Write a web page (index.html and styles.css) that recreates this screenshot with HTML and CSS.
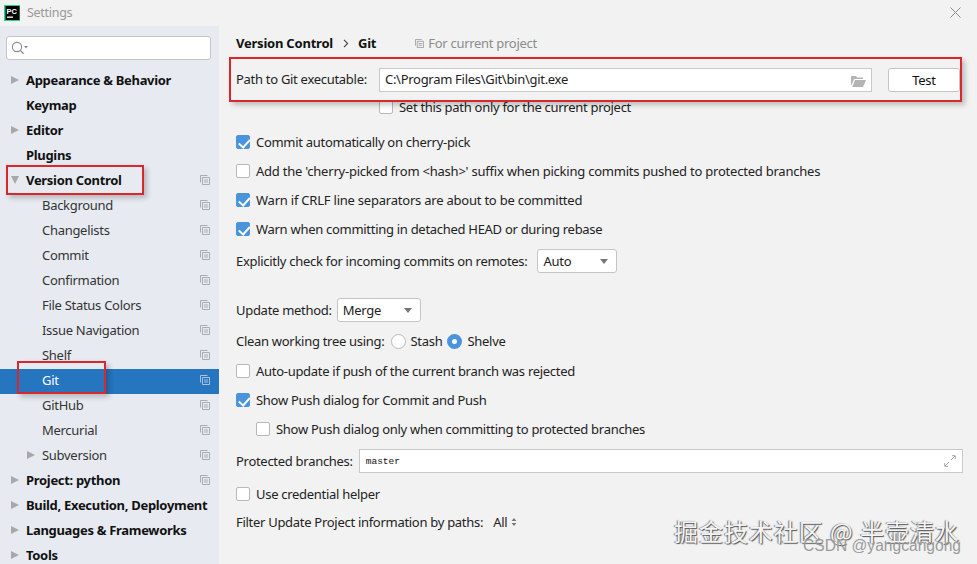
FILE: index.html
```html
<!DOCTYPE html>
<html lang="en">
<head>
<meta charset="utf-8">
<title>Settings</title>
<link rel="stylesheet" href="styles.css">
</head>
<body>
<svg class="defs" width="0" height="0" aria-hidden="true">
  <defs>
    <symbol id="copy" viewBox="0 0 10 10">
      <path d="M0.5 7.5V0.5H7.5M2.5 2.5H9.5V9.5H2.5ZM4 5H8M4 7H8" fill="none" stroke="currentColor" stroke-width="1"/>
    </symbol>
  </defs>
</svg>
<div class="window">
  <header class="titlebar">
    <svg class="logo" width="16" height="16" viewBox="0 0 16 16">
      <rect width="16" height="16" fill="#21d789"/>
      <rect x="1.5" y="1" width="14" height="14" fill="#000"/>
      <rect x="3" y="11.5" width="6" height="1.3" fill="#fff"/>
      <text x="2.6" y="8.6" class="logo-text">PC</text>
    </svg>
    <span class="title">Settings</span>
    <svg class="close" width="11" height="11" viewBox="0 0 11 11"><path d="M0.5 0.5L10.5 10.5M10.5 0.5L0.5 10.5" stroke="#8c8c8c" fill="none"/></svg>
  </header>
  <div class="body">
    <aside class="sidebar">
      <div class="search">
        <svg width="17" height="14" viewBox="0 0 17 14"><circle cx="6" cy="6" r="4.6" fill="none" stroke="#8a8a8a" stroke-width="1.1"/><path d="M9.4 9.4L12.5 12.7" stroke="#8a8a8a" stroke-width="1.3"/><path d="M13 5h4l-2 2.4z" fill="#8a8a8a"/></svg>
      </div>
      <nav class="tree">
        <div class="node top"><i class="tri"></i>Appearance &amp; Behavior</div>
        <div class="node top">Keymap</div>
        <div class="node top"><i class="tri"></i>Editor</div>
        <div class="node top">Plugins</div>
        <div class="node top"><i class="tri open"></i>Version Control<svg class="cp"><use href="#copy"/></svg></div>
        <div class="node sub">Background<svg class="cp"><use href="#copy"/></svg></div>
        <div class="node sub">Changelists<svg class="cp"><use href="#copy"/></svg></div>
        <div class="node sub">Commit<svg class="cp"><use href="#copy"/></svg></div>
        <div class="node sub">Confirmation<svg class="cp"><use href="#copy"/></svg></div>
        <div class="node sub">File Status Colors<svg class="cp"><use href="#copy"/></svg></div>
        <div class="node sub">Issue Navigation<svg class="cp"><use href="#copy"/></svg></div>
        <div class="node sub">Shelf<svg class="cp"><use href="#copy"/></svg></div>
        <div class="node sub selected">Git<svg class="cp"><use href="#copy"/></svg></div>
        <div class="node sub">GitHub<svg class="cp"><use href="#copy"/></svg></div>
        <div class="node sub">Mercurial<svg class="cp"><use href="#copy"/></svg></div>
        <div class="node sub"><i class="tri"></i>Subversion<svg class="cp"><use href="#copy"/></svg></div>
        <div class="node top"><i class="tri"></i>Project: python<svg class="cp"><use href="#copy"/></svg></div>
        <div class="node top"><i class="tri"></i>Build, Execution, Deployment</div>
        <div class="node top"><i class="tri"></i>Languages &amp; Frameworks</div>
        <div class="node top"><i class="tri"></i>Tools</div>
      </nav>
    </aside>
    <main class="panel">
      <div class="crumbs">
        <b>Version Control</b>
        <svg class="chev" width="6" height="9" viewBox="0 0 6 9"><path d="M1 .8L4.6 4.5 1 8.2" fill="none" stroke="#444" stroke-width="1.1"/></svg>
        <b>Git</b>
        <span class="scope"><svg class="cp-small"><use href="#copy"/></svg>For current project</span>
      </div>
      <div class="row path-row">
        <span class="path-label">Path to Git executable:</span>
        <div class="field path-field">C:\Program Files\Git\bin\git.exe
          <svg class="folder" width="15" height="12" viewBox="0 0 15 12"><path d="M0 11V1h5l1 1.5h6V4H3.2L0 11zM1.2 12L4 5h11l-3 7z" fill="#b4b4b4"/></svg>
        </div>
        <button class="btn">Test</button>
      </div>
      <label class="row set-row"><i class="box"></i>Set this path only for the current project</label>
      <div class="checks first">
        <label class="row chk"><i class="box on"></i>Commit automatically on cherry-pick</label>
        <label class="row chk wide"><i class="box"></i>Add the 'cherry-picked from &lt;hash&gt;' suffix when picking commits pushed to protected branches</label>
        <label class="row chk wide"><i class="box on"></i>Warn if CRLF line separators are about to be committed</label>
        <label class="row chk"><i class="box on"></i>Warn when committing in detached HEAD or during rebase</label>
      </div>
      <div class="row ctl auto-row">Explicitly check for incoming commits on remotes:<span class="combo auto">Auto<i class="caret"></i></span></div>
      <div class="row ctl merge-row">Update method:<span class="combo merge">Merge<i class="caret"></i></span></div>
      <div class="row ctl clean-row">Clean working tree using:<i class="radio"></i><span class="r-label">Stash</span><i class="radio on"></i><span>Shelve</span></div>
      <div class="checks second">
        <label class="row chk"><i class="box"></i>Auto-update if push of the current branch was rejected</label>
        <label class="row chk"><i class="box on"></i>Show Push dialog for Commit and Push</label>
        <label class="row chk nested"><i class="box"></i>Show Push dialog only when committing to protected branches</label>
      </div>
      <div class="row ctl prot-row">Protected branches:
        <div class="field prot-field"><span class="mono">master</span>
          <svg class="expand" width="12" height="12" viewBox="0 0 12 12"><path d="M7 5l4-4M8 .7h3.3V4M5 7l-4 4M.7 8v3.3H4" fill="none" stroke="#a8a8a8"/></svg>
        </div>
      </div>
      <label class="row chk cred"><i class="box"></i>Use credential helper</label>
      <div class="row ctl filter-row">Filter Update Project information by paths:<span class="all">All</span><svg width="6" height="10" viewBox="0 0 6 10"><path d="M3 1l2.4 3H.6zM3 9L.6 6h4.8z" fill="#777"/></svg></div>
    </main>
  </div>
  <div class="mark mark-path"></div>
  <div class="mark mark-vc"></div>
  <div class="mark mark-git"></div>
  <div class="wm-juejin">掘金技术社区 @ 半壶清水</div>
  <div class="wm-csdn">CSDN @yangcangong</div>
</div>
</body>
</html>
```
FILE: styles.css
```css
* { box-sizing: border-box; }
html, body { margin: 0; padding: 0; }
body { font-family: "Noto Sans", "Noto Sans CJK SC", sans-serif; font-size: 13px; letter-spacing: -.29px; color: #222; background: #f2f2f2; }
.defs { position: absolute; }
.window { position: relative; width: 977px; height: 564px; overflow: hidden; background: #f2f2f2; display: flex; flex-direction: column; }
.titlebar { height: 26px; flex: none; display: flex; align-items: center; padding: 0 16px 1px 4px; }
.logo { flex: none; }
.logo-text { font: 700 7.5px "Liberation Sans", sans-serif; fill: #fff; letter-spacing: 0; }
.title { margin-left: 7px; color: #999; font-size: 12.5px; }
.close { margin-left: auto; margin-top: 0; }
.body { flex: 1; display: flex; min-height: 0; }
.sidebar { width: 219px; flex: none; background: #e7ebf1; padding: 10px 0 0; display: flex; flex-direction: column; }
.search { flex: none; margin: 0 8px 0 6px; height: 24px; background: #fff; border: 1px solid #c4c4c4; border-radius: 3px; display: flex; align-items: center; padding-left: 4px; }
.tree { flex: none; margin-top: 9px; }
.node { height: 25px; padding-bottom: 4px; display: flex; align-items: center; position: relative; white-space: nowrap; color: #222; }
.top { padding-left: 26px; font-weight: 700; color: #111; letter-spacing: -.31px; }
.sub { padding-left: 42px; color: #333; }
.selected { background: #2675bf; color: #fff; }
.tri { position: absolute; left: 11px; top: 7px; width: 0; height: 0; border-left: 8px solid #a8a8a8; border-top: 4.5px solid transparent; border-bottom: 4.5px solid transparent; }
.sub .tri { left: 27px; }
.tri.open { left: 11px; top: 7px; border-top: 8px solid #a8a8a8; border-left: 4.5px solid transparent; border-right: 4.5px solid transparent; border-bottom: 0; }
.cp { position: absolute; left: 200px; top: 6px; width: 10px; height: 10px; color: #a9adb3; }
.selected .cp { color: #a6c4e2; }
.panel { flex: 1; padding: 5px 16px 0 17px; min-width: 0; }
.row { display: flex; align-items: center; white-space: nowrap; }
.wide { letter-spacing: -.22px; }
.crumbs { height: 24px; display: flex; align-items: center; color: #111; }
.crumbs b { letter-spacing: -.22px; }
.chev { margin: 0 9px 0 10px; }
.scope { margin-left: 39px; color: #8c8c8c; display: flex; align-items: center; }
.cp-small { width: 9px; height: 9px; margin-right: 4px; color: #a0a0a0; }
.path-row { margin-top: 13px; height: 24px; }
.path-label { width: 143px; flex: none; padding-bottom: 2px; }
.field { position: relative; background: #fff; border: 1px solid #c9c9c9; height: 24px; display: flex; align-items: center; padding-left: 5px; }
.path-field { width: 493px; flex: none; padding-bottom: 2px; }
.folder { position: absolute; right: 5px; top: 6px; }
.btn { margin-left: 16px; width: 72px; height: 24px; background: #fff; border: 1px solid #c4c4c4; border-radius: 3px; font: inherit; letter-spacing: inherit; color: #111; padding: 0; }
.set-row { margin-top: 6px; height: 18px; padding-left: 143px; }
.box { flex: none; display: block; width: 14px; height: 14px; margin-right: 6px; background: #fff; border: 1px solid #b8b8b8; border-radius: 2px; }
.box.on { background: #4a94dc; border-color: #4a94dc; position: relative; }
.box.on::after { content: ""; position: absolute; left: 3.5px; top: 1px; width: 5px; height: 8.5px; border: solid #fff; border-width: 0 2px 2px 0; transform: rotate(42deg); }
.checks.first { margin-top: 11px; }
.chk { height: 29px; }
.auto-row { margin-top: 6px; height: 24px; }
.combo { background: #fff; border: 1px solid #c4c4c4; border-radius: 3px; height: 24px; display: flex; align-items: center; padding-left: 5px; position: relative; margin-left: 10px; }
.auto { width: 80px; }
.merge { width: 84px; margin-left: 5px; }
.caret { position: absolute; right: 8px; top: 9px; width: 0; height: 0; border-top: 5px solid #777; border-left: 4.5px solid transparent; border-right: 4.5px solid transparent; }
.merge-row { margin-top: 25px; }
.ctl { height: 24px; }
.clean-row { margin-top: 7px; }
.radio { display: block; width: 15px; height: 15px; border-radius: 50%; background: #fff; border: 1px solid #b8b8b8; margin: 0 5px 0 6px; flex: none; }
.radio.on { background: #fff; border: 5px solid #4a94dc; margin-left: 0; }
.r-label { margin-right: 5px; }
.checks.second { margin-top: 3px; }
.nested { padding-left: 20px; }
.prot-row { margin-top: 6px; }
.prot-field { width: 604px; margin-left: 6px; flex: none; padding-left: 6px; }
.mono { font: 9.5px "Liberation Mono", monospace; letter-spacing: 0; color: #111; }
.expand { position: absolute; right: 6px; top: 5px; }
.cred { margin-top: 6px; }
.filter-row { margin-top: 2px; }
.all { margin: 0 4px 0 10px; }
.mark { position: absolute; border: 2px solid #d9272e; box-shadow: 3px 3px 5px rgba(0,0,0,.22); }
.mark-path { left: 229px; top: 57px; width: 733px; height: 45px; }
.mark-vc { left: 6px; top: 165px; width: 138px; height: 30px; }
.mark-git { left: 17px; top: 361px; width: 89px; height: 33px; }
.wm-juejin { position: absolute; left: 674px; top: 513px; font: 24px "Noto Sans CJK SC", sans-serif; letter-spacing: .95px; color: #f4f4f4; text-shadow: 1px 1px 1px #555, -1px 0 1px #777; white-space: nowrap; }
.wm-csdn { position: absolute; left: 803px; top: 537px; font: 15.6px "Liberation Sans", sans-serif; letter-spacing: 0; color: #9a9a9a; white-space: nowrap; }
```
